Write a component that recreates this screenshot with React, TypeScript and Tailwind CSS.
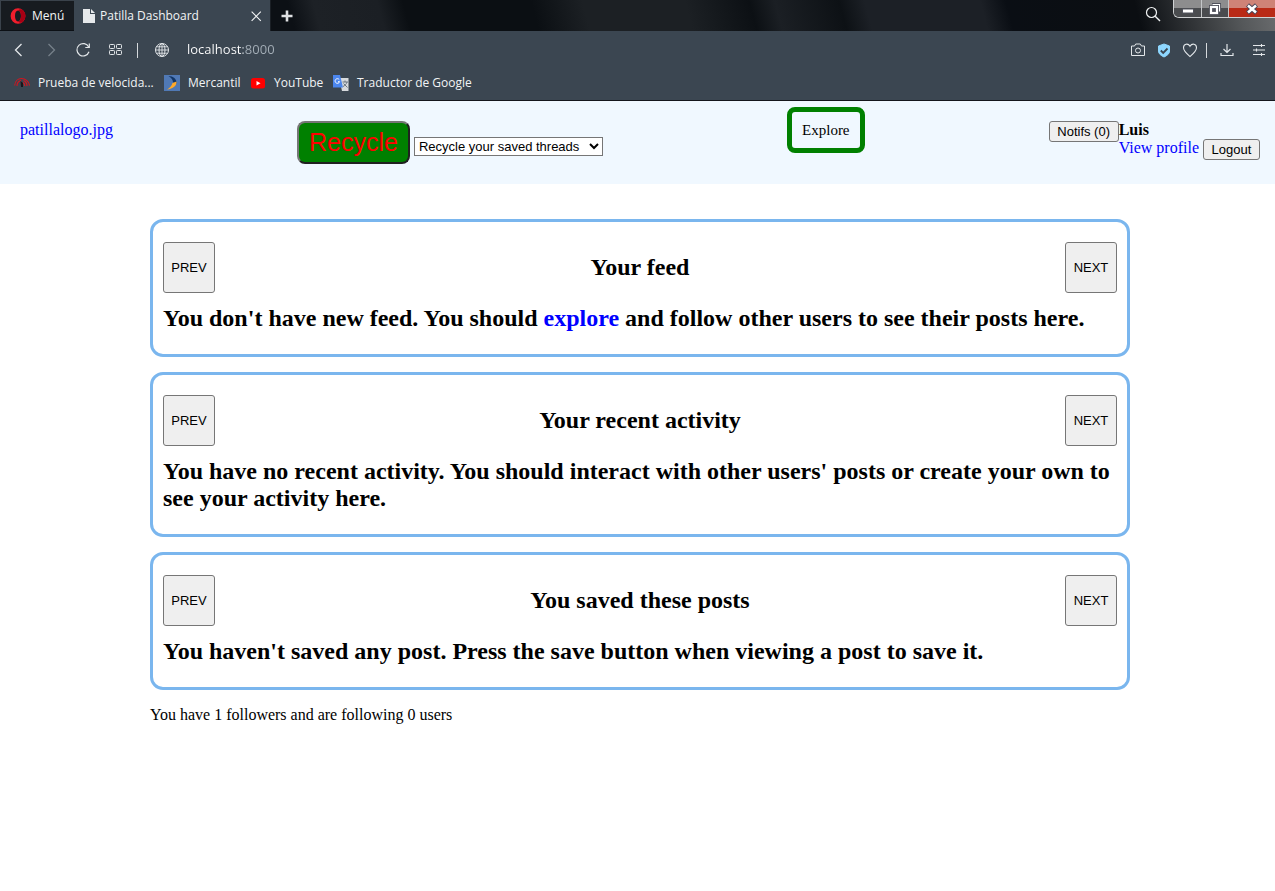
import type { ReactNode } from 'react';

const chromeButton = 'flex h-6 w-6 shrink-0 items-center justify-center';
const webButton =
  "rounded-[3px] border border-[#767676] bg-[#efefef] font-['Liberation_Sans',Arial,sans-serif] text-[13px] text-black";
const windowButton =
  'flex items-center justify-center border-r border-[#c5c7c9] bg-linear-to-b from-[#8d8d8e] from-50% to-[#4a4c4f] to-50%';

function Icon({ children, className = 'h-4 w-4' }: { children: ReactNode; className?: string }) {
  return (
    <svg viewBox="0 0 16 16" className={className} fill="none" stroke="currentColor" aria-hidden="true">
      {children}
    </svg>
  );
}

function TabStrip() {
  return (
    <div className="flex h-[31px] bg-[linear-gradient(75deg,#0c1015_23%,#1d2126_25%,#1b1f24_30%,#0b0f13_32%,#0b0f13_42%,#1c2024_46%,#1c2024_54%,#0c1014_59%,#1b1f24_61%,#0d1115_66%,#1c2026_68%,#1c2026_77%,#0a0e14_79%,#0b0e12_89%,#55585a_97%,#6b6d6f_100%)]">
      <button className="flex h-[30px] w-[74px] items-center gap-1.5 border-t border-l border-[#3a424b] bg-[#171b20] pl-[9px]">
        <svg viewBox="0 0 16 16" className="h-4 w-4" aria-hidden="true">
          <path fillRule="evenodd" fill="#f01e2c" d="M8 0.300a7.400 7.700 0 1 0 0 15.400A7.400 7.700 0 1 0 8 .300Zm0 2.300c1.900 0 3 2.400 3 5.400s-1.100 5.400-3 5.400S5 11 5 8s1.100-5.400 3-5.400Z" />
          <path fill="#a70014" d="M8 2.600c1.400-1.400 3.200-1.700 4.700-.700a8 8 0 0 1 0 12.200c-1.500 1-3.300.700-4.700-.700 1.900 0 3-2.400 3-5.400S9.900 2.600 8 2.600Z" />
        </svg>
        <span>Menú</span>
      </button>
      <div className="flex w-[197px] items-center border-r border-[#1b2026] bg-[#3b4651] pl-[9px]">
        <svg viewBox="0 0 12 14" className="h-3.5 w-3 shrink-0" fill="#e6e9eb" aria-hidden="true">
          <path d="M0 0h7v5h5v9H0Z" />
          <path d="M8 0l4 4H8Z" />
        </svg>
        <span className="ml-[5px] flex-1 whitespace-nowrap">Patilla Dashboard</span>
        <button aria-label="Close tab" className="mr-1 flex h-5 w-5 items-center justify-center">
          <Icon className="h-3.5 w-3.5"><path d="M3 3l10.500 10.500M13.500 3L3 13.500" strokeWidth="1.300" /></Icon>
        </button>
      </div>
      <button aria-label="New tab" className="flex w-8 items-center justify-center">
        <svg viewBox="0 0 12 12" className="h-3 w-3" stroke="#dfe1e3" strokeWidth="2.600" aria-hidden="true">
          <path d="M6 .500v11M.500 6h11" />
        </svg>
      </button>
      <div className="flex-1" />
      <button aria-label="Search tabs" className="mr-2.5 flex w-5 items-center justify-center pb-1">
        <Icon><circle cx="6.500" cy="6.500" r="5" strokeWidth="1.200" /><path d="M10.200 10.200L15 15" strokeWidth="1.400" /></Icon>
      </button>
      <div className="flex h-[18px] w-[102px] overflow-hidden rounded-bl-md border-b border-l border-[#d0d2d4]">
        <button aria-label="Minimize" className={`${windowButton} w-7`}>
          <svg viewBox="0 0 12 12" className="h-3 w-3" aria-hidden="true"><rect x=".500" y="6" width="11" height="4" fill="#fff" stroke="#50525c" /></svg>
        </button>
        <button aria-label="Restore" className={`${windowButton} w-[27px]`}>
          <svg viewBox="0 0 12 12" className="h-3 w-3" fill="none" aria-hidden="true">
            <path d="M3 1.500h7.500V9" stroke="#50525c" strokeWidth="3" />
            <path d="M3.500 1.500h7V8.500" stroke="#fff" strokeWidth="1.200" />
            <rect x="2" y="4" width="6" height="6" stroke="#50525c" strokeWidth="4" />
            <rect x="2" y="4" width="6" height="6" fill="#50525c" stroke="#fff" strokeWidth="2.200" />
          </svg>
        </button>
        <button aria-label="Close window" className="flex flex-1 items-center justify-center bg-linear-to-b from-[#cf8377] from-50% to-[#b92a16] to-50%">
          <svg viewBox="0 0 12 12" className="h-3 w-3" aria-hidden="true">
            <path d="M1.500 2l9 8M10.500 2l-9 8" stroke="#4a4558" strokeWidth="4.500" />
            <path d="M2 2.500l8 7M10 2.500l-8 7" stroke="#fff" strokeWidth="2.600" />
          </svg>
        </button>
      </div>
    </div>
  );
}

function AddressBar() {
  return (
    <div className="flex h-[38px] items-center pr-1 pl-[7px] text-[#e3e7ea]">
      <div className="flex gap-2">
        <button aria-label="Back" className={chromeButton}><Icon><path d="M10.500 2L4.500 8l6 6" strokeWidth="1.300" /></Icon></button>
        <button aria-label="Forward" className={`${chromeButton} text-[#76808a]`}><Icon><path d="M5.500 2l6 6-6 6" strokeWidth="1.300" /></Icon></button>
        <button aria-label="Reload" className={chromeButton}>
          <Icon><path d="M13.700 5A6.200 6.200 0 1 0 14 9.800" strokeWidth="1.200" /><path d="M14.300 1.500v4h-4" strokeWidth="1.200" /></Icon>
        </button>
        <button aria-label="Speed dial" className={chromeButton}>
          <Icon>
            <rect x="2.500" y="2.500" width="5" height="4" rx=".800" />
            <rect x="9.500" y="2.500" width="5" height="4" rx=".800" />
            <rect x="2.500" y="8.500" width="5" height="4" rx=".800" />
            <rect x="9.500" y="8.500" width="5" height="4" rx=".800" />
          </Icon>
        </button>
      </div>
      <span className="ml-2.5 h-[15px] w-px bg-[#d5d9dc]" />
      <button aria-label="Site information" className={`${chromeButton} ml-3`}>
        <Icon>
          <circle cx="8" cy="8" r="6.500" /><ellipse cx="8" cy="8" rx="3" ry="6.500" />
          <path d="M8 1.500v13M1.500 8h13M2.500 4.800h11M2.500 11.200h11" strokeWidth=".900" />
        </Icon>
      </button>
      <input
        aria-label="Address"
        defaultValue="localhost:8000"
        className="ml-[13px] min-w-0 flex-1 bg-linear-to-r from-white from-[56px] to-[#a5afb8] to-[56px] bg-clip-text text-[13px] text-transparent outline-none"
      />
      <button aria-label="Snapshot" className={chromeButton}>
        <Icon><path d="M1.500 4h3l1.200-2h4.600l1.200 2h3v9.500h-13Z" /><circle cx="8" cy="8.500" r="2.500" /></Icon>
      </button>
      <button aria-label="Ad blocker" className={`${chromeButton} ml-0.5`}>
        <Icon>
          <path d="M8 2l5.500 2v5c0 3-2.500 4.500-5.500 6-3-1.500-5.500-3-5.500-6V4Z" fill="#8ed7ff" stroke="#8ed7ff" />
          <path d="M4.800 8.500l2.400 2.400L11.500 6.500" stroke="#3b4651" strokeWidth="1.800" />
        </Icon>
      </button>
      <button aria-label="Save to bookmarks" className={`${chromeButton} ml-0.5`}>
        <Icon><path d="M8 14.500C4.500 11.500 1.500 9 1.500 5.700 1.500 1.800 6 .900 8 4.300c2-3.400 6.500-2.500 6.500 1.400C14.500 9 11.500 11.500 8 14.500Z" strokeWidth="1.100" /></Icon>
      </button>
      <span className="ml-1 h-[15px] w-px bg-[#d5d9dc]" />
      <button aria-label="Downloads" className={`${chromeButton} ml-2`}>
        <Icon><path d="M8 2v8M4.500 7L8 10.500 11.500 7M2 11v2.500h12V11" strokeWidth="1.200" /></Icon>
      </button>
      <button aria-label="Easy setup" className={`${chromeButton} ml-2`}>
        <Icon><path d="M2 3.500h12M2 8h12M2 12.500h12M10.500 2v3M5.500 6.500v3M10.500 11v3" strokeWidth="1.100" /></Icon>
      </button>
    </div>
  );
}

function BookmarksBar() {
  return (
    <nav aria-label="Bookmarks" className="flex h-[31px] items-center pb-1 pl-3.5">
      <a href="#" className="flex w-[150px] items-center gap-2 whitespace-nowrap">
        <svg viewBox="0 0 16 16" className="h-4 w-4" fill="none" aria-hidden="true">
          <path d="M.700 10.500C1 6 4 3.500 7.500 3.500s7.500 2.500 8 7M3 11C3 8 5 6 7 5.500M9.500 5.500C12 6.500 13 8.500 13 11M9 7.500c1.200.700 1.800 2 1.800 3.500" stroke="#d5141e" strokeWidth="1.100" />
          <path d="M6.500 6l2.500 2v4H7Z" fill="#17171b" />
        </svg>
        Prueba de velocida...
      </a>
      <a href="#" className="flex w-[86px] items-center gap-2">
        <svg viewBox="0 0 16 16" className="h-4 w-4" aria-hidden="true">
          <path fill="#5079b5" d="M0 0h16v16H0Z" />
          <path fill="#123667" d="M4.500 1C9 1 13 4 12.500 8.500L9 7.500C9 5 7.500 3 4.500 1Z" />
          <path fill="#ffa928" d="M12.500 6.500c.500 4-3.500 7.500-9.500 8 3-1.500 5-4.500 5.500-6.500Z" />
        </svg>
        Mercantil
      </a>
      <a href="#" className="flex w-[83px] items-center gap-2">
        <svg viewBox="0 0 16 16" className="h-4 w-4" aria-hidden="true"><rect x="1" y="3" width="14" height="10.500" rx="2.500" fill="#f00" /><path fill="#fff" d="M6.500 6v4.500l4-2.250Z" /></svg>
        YouTube
      </a>
      <a href="#" className="flex items-center gap-2 whitespace-nowrap">
        <svg viewBox="0 0 16 16" className="h-4 w-4" fill="none" aria-hidden="true">
          <path fill="#d7dadd" d="M6 3h9.500v13H9Z" />
          <path fill="#4b86ee" d="M0 0h7l3 12.500H0Z" />
          <path d="M6.300 4.700a2.300 2.300 0 1 0 .300 2H5" stroke="#fff" />
          <path d="M9.500 7H15M12 5.500V7M14 7c-.500 2-2 3.500-4 4.500M10.500 8.500l4 4" stroke="#6b7680" />
        </svg>
        Traductor de Google
      </a>
    </nav>
  );
}

function SiteHeader() {
  return (
    <header className="flex min-h-[83px] items-start justify-between bg-[#f0f8ff] pt-5 pr-[15px] pl-5">
      <a href="#" className="text-[#00f]">patillalogo.jpg</a>
      <form className="flex items-end gap-1" onSubmit={(e) => e.preventDefault()}>
        <button className="h-[43px] rounded-lg border-2 border-t-[#767676] border-r-[#212121] border-b-[#212121] border-l-[#767676] bg-[#008000] px-2.5 font-['Liberation_Sans',Arial,sans-serif] text-[25px] leading-none text-[#f00]">
          Recycle
        </button>
        <select aria-label="What to recycle" className="mb-2 h-[19px] w-[189px] border border-[#767676] bg-white font-['Liberation_Sans',Arial,sans-serif] text-[13px] leading-none text-black">
          <option>Recycle your saved threads</option>
        </select>
      </form>
      <a href="#" className="-mt-3.5 rounded-lg border-[5px] border-[#008000] px-2.5 py-[9px] text-[15px] leading-[18px] text-black">Explore</a>
      <div className="flex items-start">
        <button className={`${webButton} h-[21px] w-[70px]`}>Notifs (0)</button>
        <div>
          <strong className="block">Luis</strong>
          <div className="flex items-start gap-1">
            <a href="#" className="text-[#00f]">View profile</a>
            <button className={`${webButton} h-[21px] w-[57px]`}>Logout</button>
          </div>
        </div>
      </div>
    </header>
  );
}

function Panel({ title, children }: { title: string; children: ReactNode }) {
  return (
    <section className="rounded-[13px] border-[3px] border-[#7ab6ee] px-2.5 pt-5 pb-[22px]">
      <div className="flex items-center justify-between">
        <button className={`${webButton} h-[51px] w-[52px]`}>PREV</button>
        <h2 className="text-2xl leading-[27px] font-bold">{title}</h2>
        <button className={`${webButton} h-[51px] w-[52px]`}>NEXT</button>
      </div>
      <p className="mt-3 text-2xl leading-[27px] font-bold">{children}</p>
    </section>
  );
}

export default function App() {
  return (
    <div className="min-h-screen bg-white">
      <div className="border-b border-[#14161c] bg-[#3b4651] font-['Open_Sans','Segoe_UI',sans-serif] text-xs text-[#f2f4f5]">
        <TabStrip />
        <AddressBar />
        <BookmarksBar />
      </div>
      <div className="font-['Liberation_Serif','Times_New_Roman',serif] text-base leading-[18px] text-black">
        <SiteHeader />
        <main className="pt-[35px] pr-[145px] pl-[150px]">
          <div className="flex flex-col gap-[15px]">
            <Panel title="Your feed">
              You don't have new feed. You should <a href="#" className="text-[#00f]">explore</a> and follow other users to see their posts here.
            </Panel>
            <Panel title="Your recent activity">
              You have no recent activity. You should interact with other users' posts or create your own to see your activity here.
            </Panel>
            <Panel title="You saved these posts">
              You haven't saved any post. Press the save button when viewing a post to save it.
            </Panel>
          </div>
          <p className="mt-4">You have 1 followers and are following 0 users</p>
        </main>
      </div>
    </div>
  );
}
